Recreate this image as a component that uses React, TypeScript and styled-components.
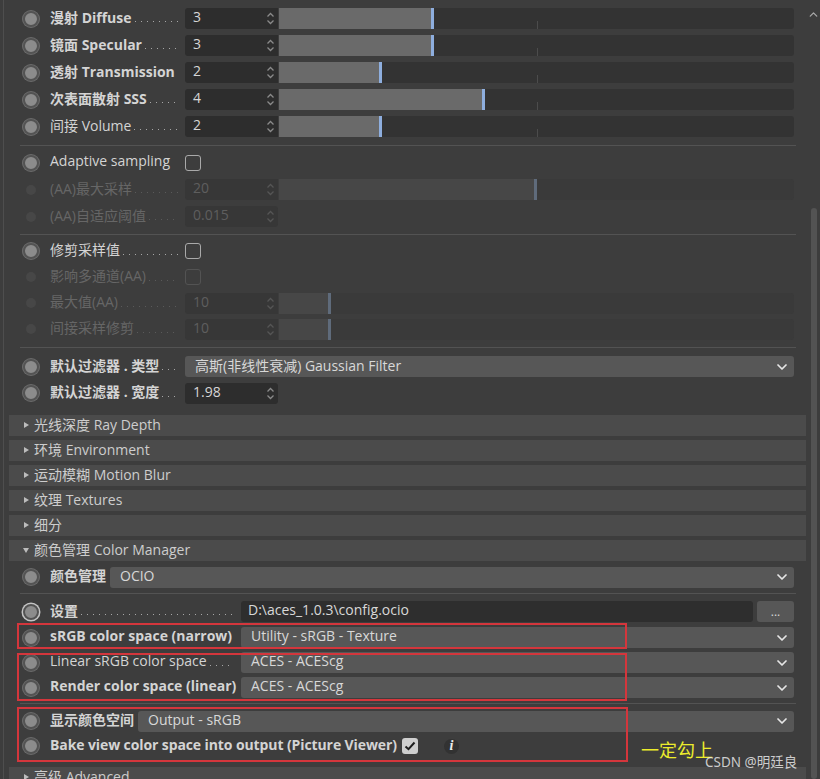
import React from 'react';
import styled, { createGlobalStyle } from 'styled-components';
import { ChevronDown, ChevronUp } from 'lucide-react';

const GlobalStyle = createGlobalStyle`
  html, body {
    margin: 0;
    padding: 0;
    background: #3d3d3d;
  }
  body {
    font-family: 'Open Sans', 'Noto Sans CJK SC', sans-serif;
    font-size: 14px;
    color: #d2d2d2;
  }
`;

type RadioState = 'on' | 'bright' | 'dim';

interface SampleRow {
  label: string;
  value: number;
  max: number;
  bold?: boolean;
  leader?: boolean;
}

// Sample counts at the top of the panel
const sampleRows: SampleRow[] = [
  { label: '漫射 Diffuse', value: 3, max: 10, bold: true, leader: true },
  { label: '镜面 Specular', value: 3, max: 10, bold: true, leader: true },
  { label: '透射 Transmission', value: 2, max: 10, bold: true },
  { label: '次表面散射 SSS', value: 4, max: 10, bold: true, leader: true },
  { label: '间接 Volume', value: 2, max: 10, leader: true },
];

const sections = ['光线深度 Ray Depth', '环境 Environment', '运动模糊 Motion Blur', '纹理 Textures', '细分'];

const Spinner = () => (
  <svg width="9" height="15" viewBox="0 0 9 15" fill="none" stroke="currentColor" strokeWidth="1.3">
    <path d="M1.5 5.5 L4.5 2.5 L7.5 5.5" />
    <path d="M1.5 9.5 L4.5 12.5 L7.5 9.5" />
  </svg>
);

const CheckMark = () => (
  <svg width="12" height="10" viewBox="0 0 12 10" fill="none" stroke="#1e1e1e" strokeWidth="2">
    <path d="M1.5 5.5 L4.5 8.2 L10.5 1.5" />
  </svg>
);

export default function App() {
  return (
    <>
      <GlobalStyle />
      <Page>
        <Content>
          {sampleRows.map(r => (
            <Row key={r.label} $h={27}>
              <RadioSlot><Radio $state="on" /></RadioSlot>
              <Label $w={135} $bold={r.bold}>
                {r.label}
                {r.leader && <Leader />}
              </Label>
              <NumberField $attached>
                {r.value}
                <Spinner />
              </NumberField>
              <Slider>
                <SliderFill style={{ width: `${(r.value / r.max) * 100}%` }} />
                <SliderTick />
              </Slider>
            </Row>
          ))}

          <Separator $mt={5} $mb={3} />

          <Row $h={27}>
            <RadioSlot><Radio $state="on" /></RadioSlot>
            <Label $w={135}>Adaptive sampling</Label>
            <Checkbox />
          </Row>
          <Row $h={27}>
            <RadioSlot><Radio $state="dim" /></RadioSlot>
            <Label $w={135} $dim>
              (AA)最大采样 <Leader />
            </Label>
            <NumberField $attached $dim>
              20
              <Spinner />
            </NumberField>
            <Slider $dim>
              <SliderFill $dim style={{ width: `${(20 / 40) * 100}%` }} />
            </Slider>
          </Row>
          <Row $h={27}>
            <RadioSlot><Radio $state="dim" /></RadioSlot>
            <Label $w={135} $dim>
              (AA)自适应阈值
              <Leader />
            </Label>
            <NumberField $dim>
              0.015
              <Spinner />
            </NumberField>
          </Row>

          <Separator $mt={4} $mb={3} />

          <Row $h={26}>
            <RadioSlot><Radio $state="on" /></RadioSlot>
            <Label $w={135}>
              修剪采样值 <Leader />
            </Label>
            <Checkbox />
          </Row>
          <Row $h={26}>
            <RadioSlot><Radio $state="dim" /></RadioSlot>
            <Label $w={135} $dim>
              影响多通道(AA)
              <Leader />
            </Label>
            <Checkbox $dim />
          </Row>
          <Row $h={26}>
            <RadioSlot><Radio $state="dim" /></RadioSlot>
            <Label $w={135} $dim>
              最大值(AA) <Leader />
            </Label>
            <NumberField $attached $dim>
              10
              <Spinner />
            </NumberField>
            <Slider $dim>
              <SliderFill $dim style={{ width: `${(10 / 100) * 100}%` }} />
            </Slider>
          </Row>
          <Row $h={26}>
            <RadioSlot><Radio $state="dim" /></RadioSlot>
            <Label $w={135} $dim>
              间接采样修剪
              <Leader />
            </Label>
            <NumberField $attached $dim>
              10
              <Spinner />
            </NumberField>
            <Slider $dim>
              <SliderFill $dim style={{ width: `${(10 / 100) * 100}%` }} />
            </Slider>
          </Row>

          <Separator $mt={5} $mb={5} />

          <Row $h={27}>
            <RadioSlot><Radio $state="on" /></RadioSlot>
            <Label $w={135} $bold>
              默认过滤器 . 类型
              <Leader />
            </Label>
            <Dropdown>
              高斯(非线性衰减) Gaussian Filter
              <ChevronDown size={16} strokeWidth={2.6} />
            </Dropdown>
          </Row>
          <Row $h={26}>
            <RadioSlot><Radio $state="on" /></RadioSlot>
            <Label $w={135} $bold>
              默认过滤器 . 宽度
              <Leader />
            </Label>
            <NumberField>
              1.98
              <Spinner />
            </NumberField>
          </Row>

          <Sections>
            {sections.map(s => (
              <Header key={s}>
                <Triangle />
                {s}
              </Header>
            ))}
            <Header>
              <Triangle $open />
              颜色管理 Color Manager
            </Header>
          </Sections>

          <Row $h={24}>
            <RadioSlot><Radio $state="on" /></RadioSlot>
            <Label $w={60} $bold>颜色管理</Label>
            <Dropdown>
              OCIO
              <ChevronDown size={16} strokeWidth={2.6} />
            </Dropdown>
          </Row>

          <Separator $mt={4} $mb={4} />

          <Row $h={27}>
            <RadioSlot><Radio $state="bright" /></RadioSlot>
            <Label $w={191} $bold>
              设置
              <Leader />
            </Label>
            <TextField>D:\aces_1.0.3\config.ocio</TextField>
            <BrowseButton>...</BrowseButton>
          </Row>
          <Row $h={25}>
            <RadioSlot><Radio $state="on" /></RadioSlot>
            <Label $w={191} $bold>sRGB color space (narrow)</Label>
            <Dropdown>
              Utility - sRGB - Texture
              <ChevronDown size={16} strokeWidth={2.6} />
            </Dropdown>
          </Row>
          <Row $h={25}>
            <RadioSlot><Radio $state="on" /></RadioSlot>
            <Label $w={191}>
              Linear sRGB color space
              <Leader />
            </Label>
            <Dropdown>
              ACES - ACEScg
              <ChevronDown size={16} strokeWidth={2.6} />
            </Dropdown>
          </Row>
          <Row $h={25}>
            <RadioSlot><Radio $state="on" /></RadioSlot>
            <Label $w={191} $bold>Render color space (linear)</Label>
            <Dropdown>
              ACES - ACEScg
              <ChevronDown size={16} strokeWidth={2.6} />
            </Dropdown>
          </Row>

          <Separator $mt={3} $mb={4} />

          <Row $h={26}>
            <RadioSlot><Radio $state="on" /></RadioSlot>
            <Label $w={88} $bold>显示颜色空间</Label>
            <Dropdown>
              Output - sRGB
              <ChevronDown size={16} strokeWidth={2.6} />
            </Dropdown>
          </Row>
          <Row $h={24}>
            <RadioSlot><Radio $state="on" /></RadioSlot>
            <Label $bold $tight>Bake view color space into output (Picture Viewer)</Label>
            <Checkbox $checked>
              <CheckMark />
            </Checkbox>
            <InfoBadge>i</InfoBadge>
          </Row>

          <Header $mt={9}>
            <Triangle />
            高级 Advanced
          </Header>
        </Content>

        <Scrollbar>
          <ChevronUp size={13} strokeWidth={2.4} color="#a8a8a8" />
          <ScrollThumb />
        </Scrollbar>

        {/* annotations drawn over the screenshot */}
        <RedBox style={{ left: 17, top: 623, width: 610, height: 26 }} />
        <RedBox style={{ left: 17, top: 653, width: 610, height: 48 }} />
        <RedBox style={{ left: 17, top: 707, width: 611, height: 55 }} />
        <Note>一定勾上</Note>
        <Watermark>CSDN @明廷良</Watermark>
      </Page>
    </>
  );
}

const Page = styled.div`
  position: relative;
  width: 820px;
  height: 779px;
  overflow: hidden;
  display: flex;
  padding-left: 3px;
  box-sizing: border-box;
  background: #3d3d3d;
`;

const Content = styled.div`
  flex: 1;
  display: flex;
  flex-direction: column;
  padding-top: 5px;
  border-left: 1px solid #4e4e4e;
`;

const Row = styled.div<{ $h: number }>`
  display: flex;
  align-items: center;
  flex-shrink: 0;
  height: ${p => p.$h}px;
  padding: 0 13px 0 18px;
`;

const RadioSlot = styled.span`
  width: 17px;
  height: 17px;
  margin-right: 11px;
  display: flex;
  align-items: center;
  justify-content: center;
  flex-shrink: 0;
`;

const Radio = styled.span<{ $state: RadioState }>`
  box-sizing: border-box;
  border-radius: 50%;
  width: ${p => (p.$state === 'dim' ? 10 : 16)}px;
  height: ${p => (p.$state === 'dim' ? 10 : 16)}px;
  background: ${p => (p.$state === 'dim' ? '#474747' : '#8c8c8c')};
  border: ${p => (p.$state === 'dim' ? 'none' : '2.5px solid #535353')};
  box-shadow: ${p =>
    p.$state === 'bright' ? '0 0 0 1.5px #c4c4c4' : p.$state === 'on' ? '0 0 0 1px #6c6c6c' : 'none'};
`;

const Label = styled.span<{ $w?: number; $bold?: boolean; $dim?: boolean; $tight?: boolean }>`
  display: flex;
  align-items: baseline;
  flex-shrink: 0;
  box-sizing: border-box;
  width: ${p => (p.$w ? `${p.$w}px` : 'auto')};
  padding-right: ${p => (p.$w ? 7 : 5)}px;
  padding-bottom: 4px;
  white-space: nowrap;
  letter-spacing: ${p => (p.$tight ? '-0.1px' : 'normal')};
  font-weight: ${p => (p.$bold ? 700 : 400)};
  color: ${p => (p.$dim ? '#666666' : '#d4d4d4')};
`;

const Leader = styled.span`
  flex: 1;
  height: 1.4px;
  margin-left: 3px;
  background-image: linear-gradient(to right, currentColor 1.4px, transparent 1.4px);
  background-size: 6px 1.4px;
  background-repeat: repeat-x;
  opacity: 0.7;
`;

const NumberField = styled.div<{ $dim?: boolean; $attached?: boolean }>`
  box-sizing: border-box;
  width: 93px;
  height: 21px;
  flex-shrink: 0;
  display: flex;
  align-items: center;
  justify-content: space-between;
  padding: 0 3px 4px 8px;
  border-radius: ${p => (p.$attached ? '3px 0 0 3px' : '3px')};
  background: ${p => (p.$dim ? '#373737' : '#2d2d2d')};
  color: ${p => (p.$dim ? '#5e5e5e' : '#d6d6d6')};

  svg {
    margin-bottom: -4px;
    color: ${p => (p.$dim ? '#555555' : '#8a8a8a')};
  }
`;

const Slider = styled.div<{ $dim?: boolean }>`
  position: relative;
  flex: 1;
  height: 21px;
  margin-left: 1px;
  overflow: hidden;
  border-radius: 0 3px 3px 0;
  background: ${p => (p.$dim ? '#3a3a3a' : '#333333')};
`;

const SliderFill = styled.div<{ $dim?: boolean }>`
  position: absolute;
  left: 0;
  top: 0;
  bottom: 0;
  box-sizing: border-box;
  background: ${p => (p.$dim ? '#474747' : '#6a6a6a')};
  border-right: 3px solid ${p => (p.$dim ? '#5f6b7b' : '#8eaede')};
  z-index: 1;
`;

const SliderTick = styled.div`
  position: absolute;
  left: 50%;
  bottom: 0;
  width: 1px;
  height: 8px;
  background: #4c4c4c;
`;

const Checkbox = styled.span<{ $dim?: boolean; $checked?: boolean }>`
  box-sizing: border-box;
  width: 16px;
  height: 16px;
  flex-shrink: 0;
  display: flex;
  align-items: center;
  justify-content: center;
  border-radius: 3px;
  border: ${p => (p.$checked ? 'none' : `1.5px solid ${p.$dim ? '#535353' : '#a9a9a9'}`)};
  background: ${p => (p.$checked ? '#cfcfcf' : 'transparent')};
`;

const Dropdown = styled.div`
  flex: 1;
  height: 21px;
  box-sizing: border-box;
  display: flex;
  align-items: center;
  justify-content: space-between;
  padding: 0 4px 4px 10px;
  border-radius: 3px;
  background: #575757;
  color: #d8d8d8;
  white-space: nowrap;

  svg {
    margin-bottom: -4px;
    color: #e6e6e6;
  }
`;

const TextField = styled.div`
  flex: 1;
  height: 21px;
  box-sizing: border-box;
  display: flex;
  align-items: center;
  padding: 0 0 4px 7px;
  border-radius: 3px;
  background: #2e2e2e;
  color: #d8d8d8;
`;

const BrowseButton = styled.div`
  width: 37px;
  height: 21px;
  margin-left: 4px;
  display: flex;
  align-items: center;
  justify-content: center;
  border-radius: 3px;
  background: #575757;
  color: #d8d8d8;
  font-size: 12px;
`;

const InfoBadge = styled.span`
  width: 15px;
  height: 15px;
  margin-left: 26px;
  border-radius: 50%;
  display: flex;
  align-items: center;
  justify-content: center;
  background: #323232;
  color: #eeeeee;
  font-family: 'Liberation Serif', serif;
  font-style: italic;
  font-weight: 700;
  font-size: 14px;
`;

const Separator = styled.div<{ $mt: number; $mb: number }>`
  height: 1px;
  flex-shrink: 0;
  margin: ${p => p.$mt}px 11px ${p => p.$mb}px 16px;
  background: #535353;
`;

const Sections = styled.div`
  display: flex;
  flex-direction: column;
  margin-top: 9px;
`;

const Header = styled.div<{ $mt?: number }>`
  height: 21px;
  box-sizing: border-box;
  flex-shrink: 0;
  display: flex;
  align-items: center;
  gap: 5px;
  margin: ${p => p.$mt ?? 0}px 1px 4px 5px;
  padding: 0 0 3px 15px;
  background: #4b4b4b;
  color: #cdcdcd;
  white-space: nowrap;
`;

const Triangle = styled.span<{ $open?: boolean }>`
  width: 0;
  height: 0;
  margin-top: 2px;
  ${p =>
    p.$open
      ? `border-top: 5px solid #bcbcbc;
         border-left: 3.5px solid transparent;
         border-right: 3.5px solid transparent;
         margin-left: -1px;`
      : `border-left: 5px solid #bcbcbc;
         border-top: 3.5px solid transparent;
         border-bottom: 3.5px solid transparent;`}
`;

const Scrollbar = styled.div`
  width: 13px;
  display: flex;
  flex-direction: column;
  align-items: center;
  padding-top: 8px;
`;

const ScrollThumb = styled.div`
  flex: 1;
  width: 6px;
  margin-top: 187px;
  border-radius: 3px;
  background: #535353;
`;

const RedBox = styled.div`
  position: absolute;
  box-sizing: border-box;
  border: 2px solid #d4363c;
  pointer-events: none;
`;

const Note = styled.div`
  position: absolute;
  left: 641px;
  top: 736px;
  font-family: 'Noto Sans CJK SC', sans-serif;
  font-size: 18px;
  color: #ecec2c;
`;

const Watermark = styled.div`
  position: absolute;
  left: 705px;
  top: 751px;
  font-family: 'Noto Sans', 'Noto Sans CJK SC', sans-serif;
  font-size: 13.5px;
  color: rgba(232, 232, 232, 0.85);
`;
